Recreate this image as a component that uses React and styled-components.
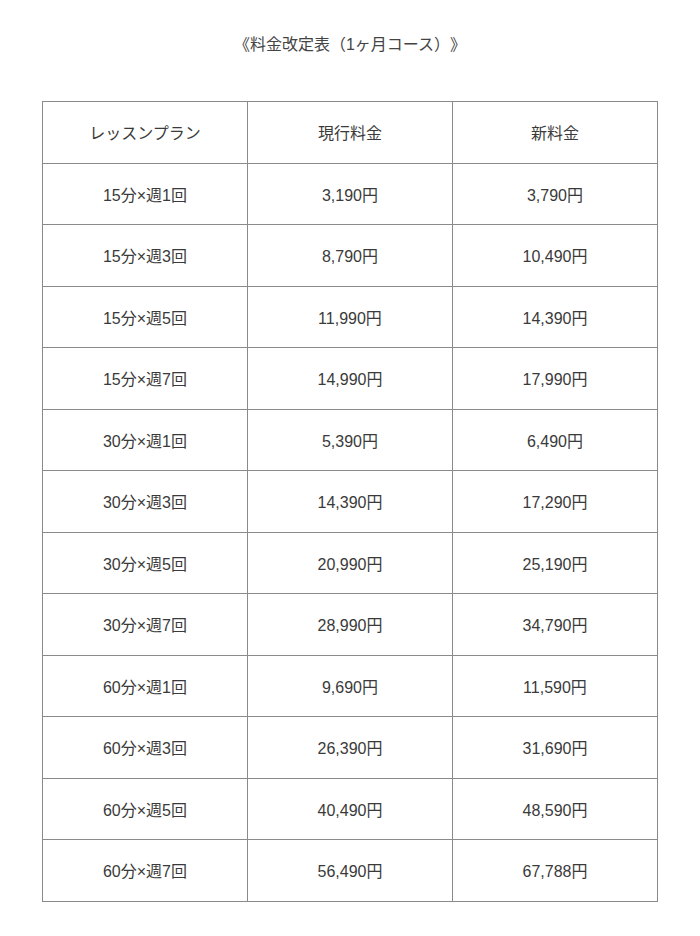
import styled, { createGlobalStyle } from 'styled-components';

const GlobalStyle = createGlobalStyle`
  body {
    margin: 0;
    background: #ffffff;
    font-family: "Liberation Sans", Arial, "Noto Sans CJK JP", sans-serif;
    color: #3a3a3a;
  }
`;

const Page = styled.div`
  width: 700px;
  padding-top: 34px;
  display: flex;
  flex-direction: column;
  align-items: center;
`;

const Title = styled.h1`
  margin: 0;
  font-size: 16px;
  font-weight: normal;
  line-height: 22px;
  color: #444;
  text-spacing-trim: space-all;
`;

const Table = styled.table`
  margin-top: 45px;
  width: 616px;
  border-collapse: collapse;
  table-layout: fixed;
  font-size: 16px;
  color: #3a3a3a;
`;

const Cell = styled.td`
  border: 1px solid #8a8a8a;
  height: 60.5px;
  padding: 0;
  text-align: center;
  vertical-align: middle;
`;

const HeadCell = styled(Cell).attrs({ as: 'th' })`
  font-weight: normal;
`;

const rows = [
  ['15分×週1回', '3,190円', '3,790円'],
  ['15分×週3回', '8,790円', '10,490円'],
  ['15分×週5回', '11,990円', '14,390円'],
  ['15分×週7回', '14,990円', '17,990円'],
  ['30分×週1回', '5,390円', '6,490円'],
  ['30分×週3回', '14,390円', '17,290円'],
  ['30分×週5回', '20,990円', '25,190円'],
  ['30分×週7回', '28,990円', '34,790円'],
  ['60分×週1回', '9,690円', '11,590円'],
  ['60分×週3回', '26,390円', '31,690円'],
  ['60分×週5回', '40,490円', '48,590円'],
  ['60分×週7回', '56,490円', '67,788円'],
];

export default function App() {
  return (
    <>
      <GlobalStyle />
      <Page>
        <Title>《料金改定表（1ヶ月コース）》</Title>
        <Table>
          <thead>
            <tr>
              <HeadCell>レッスンプラン</HeadCell>
              <HeadCell>現行料金</HeadCell>
              <HeadCell>新料金</HeadCell>
            </tr>
          </thead>
          <tbody>
            {rows.map((r) => (
              <tr key={r[0]}>
                {r.map((c, i) => (
                  <Cell key={i}>{c}</Cell>
                ))}
              </tr>
            ))}
          </tbody>
        </Table>
      </Page>
    </>
  );
}
